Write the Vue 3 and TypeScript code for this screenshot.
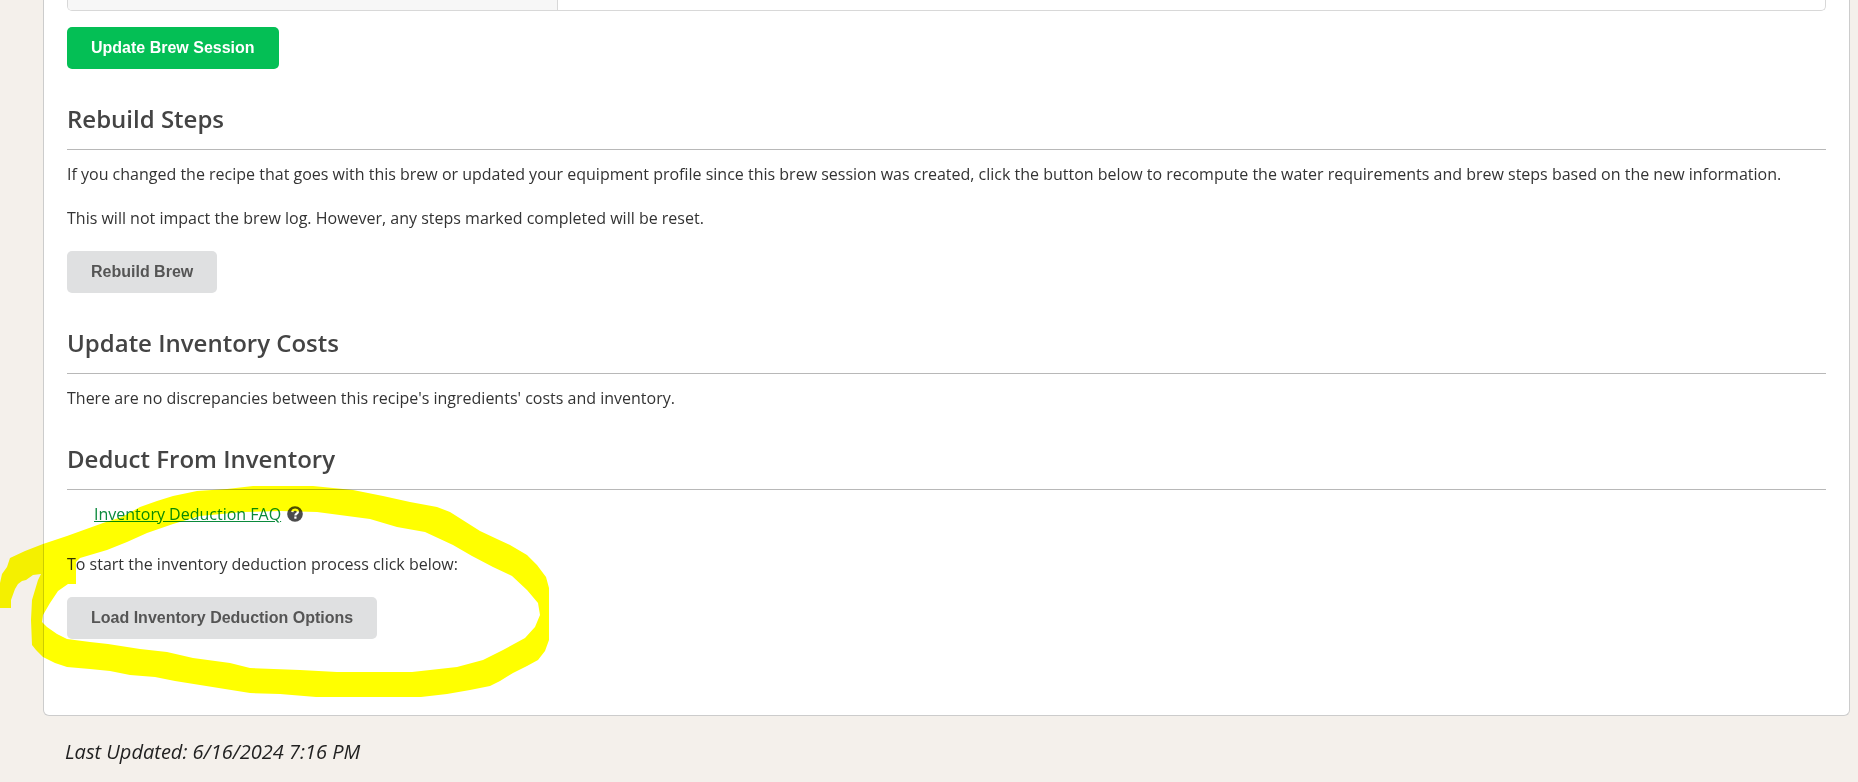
<script setup lang="ts">
import { ref } from 'vue'

const lastUpdated = ref<string>('6/16/2024 7:16 PM')
</script>

<template>
  <div class="page">
    <main class="card">
      <div class="fields">
        <div class="fields-label"></div>
        <div class="fields-value"></div>
      </div>
      <button type="button" class="btn btn-primary">Update Brew Session</button>

      <section class="section">
        <h2>Rebuild Steps</h2>
        <p>If you changed the recipe that goes with this brew or updated your equipment profile since this brew session was created, click the button below to recompute the water requirements and brew steps based on the new information.</p>
        <p>This will not impact the brew log. However, any steps marked completed will be reset.</p>
        <button type="button" class="btn">Rebuild Brew</button>
      </section>

      <section class="section">
        <h2>Update Inventory Costs</h2>
        <p>There are no discrepancies between this recipe's ingredients' costs and inventory.</p>
      </section>

      <section class="section">
        <h2>Deduct From Inventory</h2>
        <div class="faq">
          <a href="#faq">Inventory Deduction FAQ</a>
          <svg class="help" viewBox="0 0 16 16" aria-hidden="true">
            <circle cx="8" cy="8" r="7.8" fill="#4c4c4c" />
            <path d="M5.3 6.1C5.4 4.4 6.5 3.6 8.1 3.6C9.7 3.6 10.9 4.6 10.9 6C10.9 7.6 8.4 7.6 8.4 9.4" fill="none" stroke="#fff" stroke-width="2.2" />
            <rect x="7.3" y="10.5" width="2.2" height="2.2" fill="#fff" />
          </svg>
        </div>
        <p>To start the inventory deduction process click below:</p>
        <button type="button" class="btn">Load Inventory Deduction Options</button>

        <svg class="marker" viewBox="0 480 560 225" aria-hidden="true">
          <path
            fill="#ff0"
            d="M0 608H11V600L15 589L18 584L22 581L26 580L33 575L41 574L38 580L35 590L32 600L31 620L32 645L36 650L43 657L55 663L67 667L90 669L110 671L130 675L155 677L175 681L200 685L225 689L250 693L280 694L316 697H421L447 694L470 690L490 686L500 681L513 673L527 666L538 660L545 651L549 640V588L546 577L537 565L527 555L510 545L497 539L480 531L450 512L437 507L410 502L383 496L353 490L313 486H253L227 489L197 491L173 496L157 501L140 507L122 517L103 523L67 536L43 544L25 551L10 558L7 567L2 574L0 583Z
            M76 584V562L80 558L107 550L127 542L147 533L173 524L200 516L243 512L280 511L317 512L370 519L397 527L425 532L453 545L472 556L493 567L512 576L527 590L538 603L540 615L535 627L525 638L503 650L483 660L457 667L412 672H337L300 670L250 668L230 663L193 658L167 652L140 649L108 644L90 642L67 639L57 634L47 627L42 622L43 615L50 603L58 591L68 584Z"
            fill-rule="evenodd"
          />
        </svg>
      </section>
    </main>
    <footer class="updated">Last Updated: {{ lastUpdated }}</footer>
  </div>
</template>

<style>
body {
  background: #f4f0eb;
}
</style>

<style scoped>
.page {
  padding: 0 8px 16px 43px;
  color: #333;
  font-family: "Open Sans", "Noto Sans", sans-serif;
  font-size: 16px;
  line-height: 22px;
}

.card {
  padding: 0 23px 76px;
  background: #fff;
  border: 1px solid #ccc;
  border-top: 0;
  border-radius: 0 0 6px 6px;
}

.fields {
  display: flex;
  height: 10px;
  margin-bottom: 16px;
  overflow: hidden;
  border: 1px solid #d8d8d8;
  border-top: 0;
  border-radius: 0 0 5px 5px;
}

.fields-label {
  flex: 0 0 490px;
  box-sizing: border-box;
  background: #f7f7f7;
  border-right: 1px solid #d8d8d8;
}

.fields-value {
  flex: 1;
}

.section {
  position: relative;
  margin-top: 34px;
}

h2 {
  margin: 0 0 13px;
  padding-bottom: 14px;
  border-bottom: 1px solid #b8b8b8;
  color: #444;
  font-size: 24px;
  font-weight: 600;
  line-height: 32px;
}

p {
  margin: 0;
}

p + p,
p + .btn {
  margin-top: 22px;
}

.btn {
  display: block;
  height: 42px;
  padding: 0 24px;
  border: 0;
  border-radius: 5px;
  background: #dfe0e1;
  color: #555;
  font-family: "Liberation Sans", Arial, sans-serif;
  font-size: 16px;
  font-weight: 700;
  cursor: pointer;
}

.btn-primary {
  background: #04bf55;
  color: #fff;
}

.faq {
  display: flex;
  align-items: center;
  gap: 6px;
  margin: 0 0 28px 27px;
}

.faq a {
  color: #0a8a3c;
}

.help {
  width: 16px;
  height: 16px;
}

.marker {
  position: absolute;
  top: 37px;
  left: -67px;
  width: 560px;
  height: 225px;
  mix-blend-mode: multiply;
  pointer-events: none;
}

.updated {
  padding: 22px 22px 0;
  color: #222;
  font-size: 20px;
  font-style: italic;
  line-height: 28px;
}
</style>
